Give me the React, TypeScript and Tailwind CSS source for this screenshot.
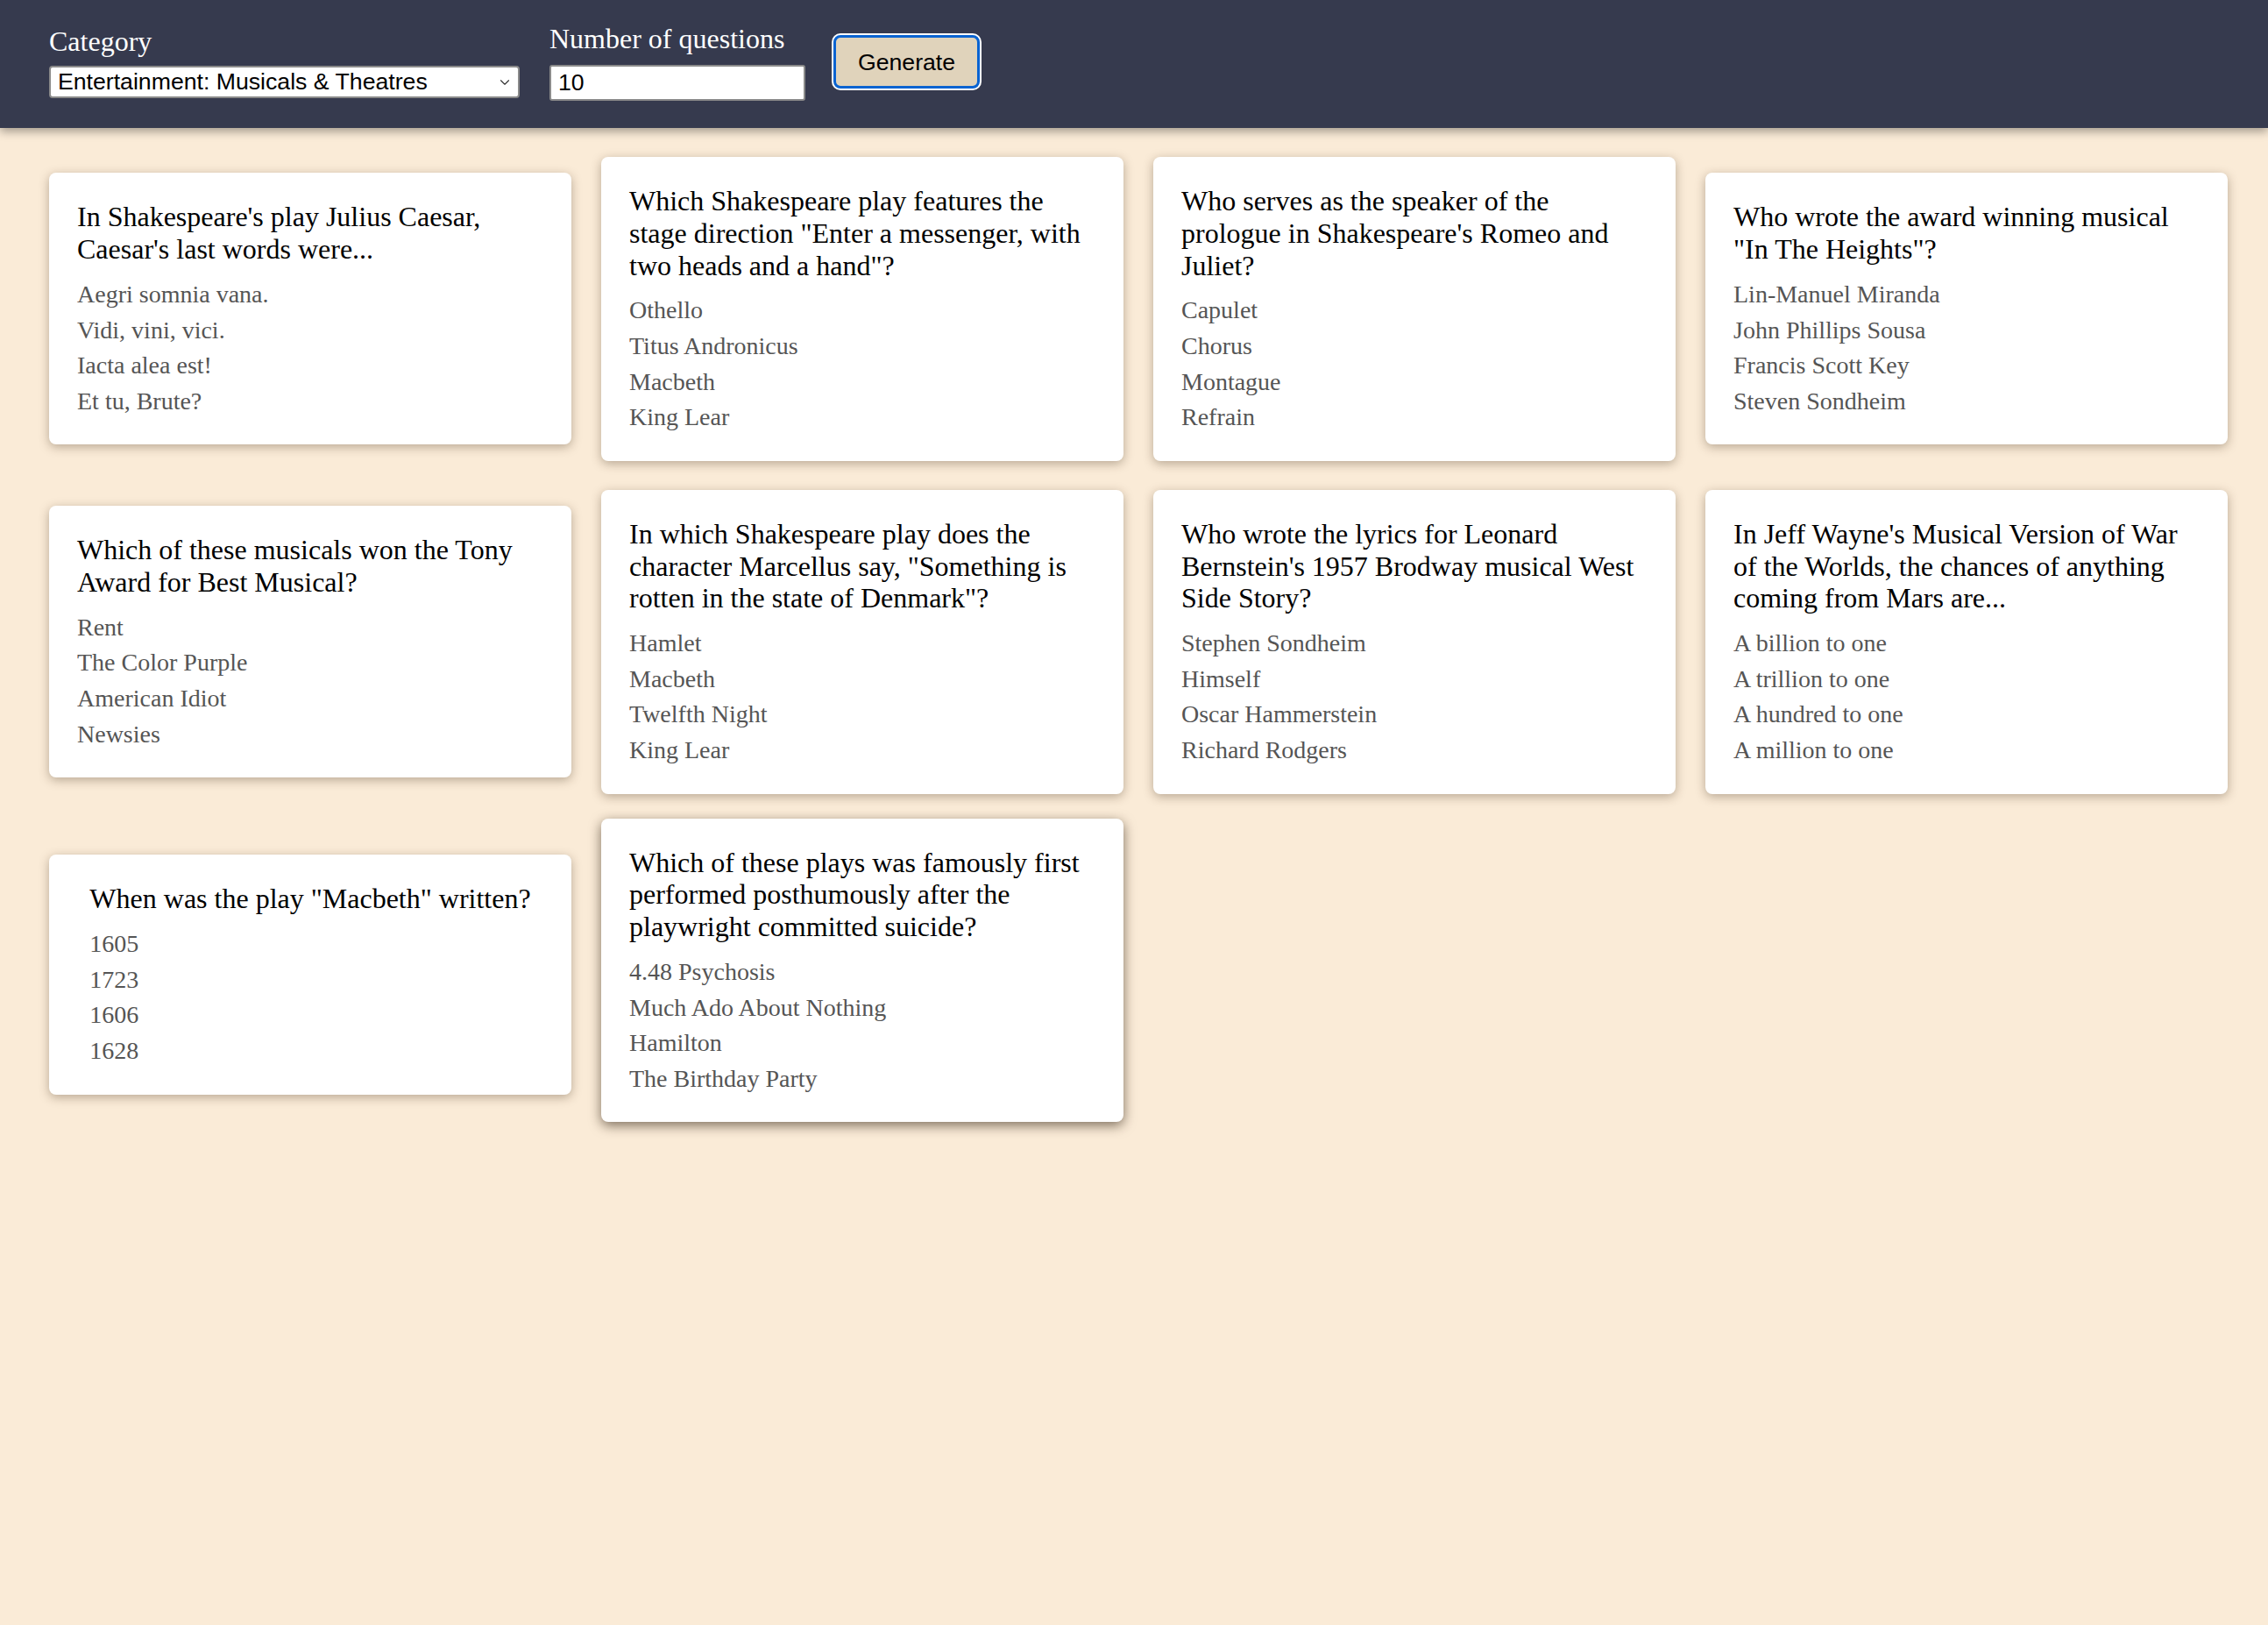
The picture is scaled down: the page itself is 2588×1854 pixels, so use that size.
import { ChevronDown } from "lucide-react";

interface Question {
  question: string;
  answers: string[];
}

const questions: Question[] = [
  {
    question: "In Shakespeare's play Julius Caesar, Caesar's last words were...",
    answers: ["Aegri somnia vana.", "Vidi, vini, vici.", "Iacta alea est!", "Et tu, Brute?"],
  },
  {
    question: 'Which Shakespeare play features the stage direction "Enter a messenger, with two heads and a hand"?',
    answers: ["Othello", "Titus Andronicus", "Macbeth", "King Lear"],
  },
  {
    question: "Who serves as the speaker of the prologue in Shakespeare's Romeo and Juliet?",
    answers: ["Capulet", "Chorus", "Montague", "Refrain"],
  },
  {
    question: 'Who wrote the award winning musical "In The Heights"?',
    answers: ["Lin-Manuel Miranda", "John Phillips Sousa", "Francis Scott Key", "Steven Sondheim"],
  },
  {
    question: "Which of these musicals won the Tony Award for Best Musical?",
    answers: ["Rent", "The Color Purple", "American Idiot", "Newsies"],
  },
  {
    question: 'In which Shakespeare play does the character Marcellus say, "Something is rotten in the state of Denmark"?',
    answers: ["Hamlet", "Macbeth", "Twelfth Night", "King Lear"],
  },
  {
    question: "Who wrote the lyrics for Leonard Bernstein's 1957 Brodway musical West Side Story?",
    answers: ["Stephen Sondheim", "Himself", "Oscar Hammerstein", "Richard Rodgers"],
  },
  {
    question: "In Jeff Wayne's Musical Version of War of the Worlds, the chances of anything coming from Mars are...",
    answers: ["A billion to one", "A trillion to one", "A hundred to one", "A million to one"],
  },
  {
    question: 'When was the play "Macbeth" written?',
    answers: ["1605", "1723", "1606", "1628"],
  },
  {
    question: "Which of these plays was famously first performed posthumously after the playwright committed suicide?",
    answers: ["4.48 Psychosis", "Much Ado About Nothing", "Hamilton", "The Birthday Party"],
  },
];

const QuestionCard = ({ item, hovered }: { item: Question; hovered?: boolean }) => {
  return (
    <div
      className={
        hovered
          ? "flex justify-center bg-white rounded-lg px-[32px] pt-[32px] pb-[29px] -translate-y-[5px] shadow-[0_4px_14px_rgba(40,25,10,0.6)]"
          : "flex justify-center bg-white rounded-lg px-[32px] pt-[32px] pb-[29px] shadow-[0_3px_12px_rgba(60,40,20,0.35)]"
      }
    >
      <div>
        <p className="text-[32px] leading-[36.8px] text-black mb-[13px]">{item.question}</p>
        {item.answers.map((answer) => (
          <p key={answer} className="text-[28px] leading-[40.6px] text-[#555555]">
            {answer}
          </p>
        ))}
      </div>
    </div>
  );
};

export default function App() {
  return (
    <div className="min-h-screen bg-[#faebd7] font-['Liberation_Serif',serif]">
      <header className="h-[146px] bg-[#363a4e] flex items-center pl-[56px] pb-[5px] shadow-[0_4px_10px_rgba(0,0,0,0.35)] relative">
        <div className="flex flex-col">
          <label className="text-white text-[32px] leading-[37px]">Category</label>
          <div className="relative mt-[9px] w-[537px]">
            <select
              defaultValue="musicals"
              className="appearance-none w-full h-[37px] bg-white border-2 border-[#8a8a8a] rounded-[4px] pl-[8px] text-[26.67px] leading-none text-black font-['Liberation_Sans',sans-serif]"
            >
              <option value="musicals">Entertainment: Musicals &amp; Theatres</option>
            </select>
            <ChevronDown
              className="absolute right-[8px] top-[10px] w-[18px] h-[18px] text-[#333] pointer-events-none"
              strokeWidth={1.5}
            />
          </div>
        </div>
        <div className="flex flex-col ml-[34px]">
          <label className="text-white text-[32px] leading-[37px]">Number of questions</label>
          <input
            defaultValue="10"
            className="mt-[11px] w-[292px] h-[41px] bg-white border-2 border-[#8a8a8a] rounded-[3px] px-[8px] text-[26.67px] text-black font-['Liberation_Sans',sans-serif]"
          />
        </div>
        <button className="ml-[32px] w-[167px] h-[61px] bg-[#e0d3bb] border-[3px] border-[#0a63d1] rounded-[8px] shadow-[0_0_0_2px_#ffffff] text-[26.67px] text-black font-['Liberation_Sans',sans-serif]">
          Generate
        </button>
      </header>

      <main className="grid grid-cols-[repeat(4,596px)] gap-x-[34px] gap-y-[33px] items-center pl-[56px] pt-[33px] pb-[40px]">
        {questions.map((item, i) => (
          <QuestionCard key={item.question} item={item} hovered={i === 9} />
        ))}
      </main>
    </div>
  );
}
